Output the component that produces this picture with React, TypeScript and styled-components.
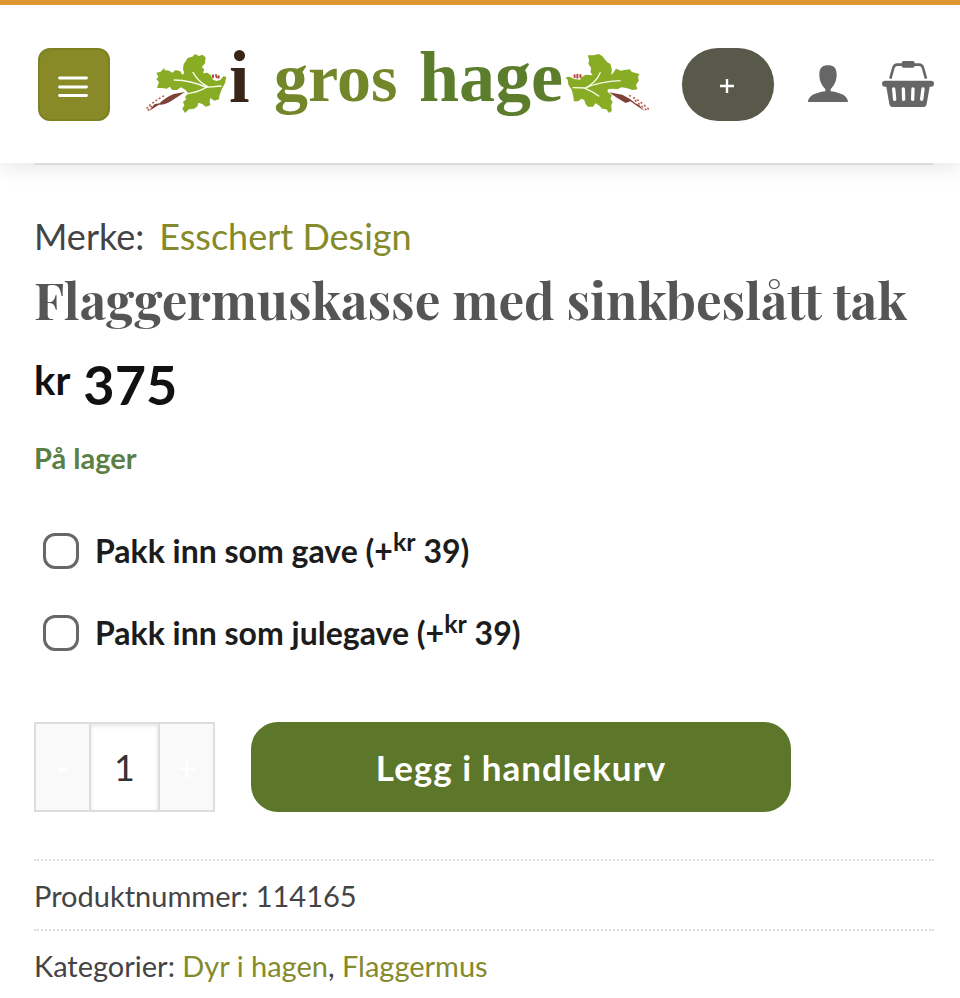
import React, { useState } from "react";
import styled, { createGlobalStyle } from "styled-components";

const olive = "#858a2a";

const GlobalStyle = createGlobalStyle`
  *, *::before, *::after { box-sizing: border-box; }
  body {
    margin: 0;
    background: #fff;
    color: #444446;
    font-family: Lato, "Open Sans", sans-serif;
  }
  button, input { font-family: inherit; margin: 0; }
`;

const Header = styled.header`
  display: flex;
  align-items: center;
  justify-content: space-between;
  border-top: 5px solid #dd9833;
  padding: 43px 26px 42px 38px;
  background: #fff;
  box-shadow: 1px 1px 24px rgba(0, 0, 0, 0.13);
`;

const MenuButton = styled.button`
  display: grid;
  place-items: center;
  width: 72px;
  height: 73px;
  padding: 5px 3px 0 0;
  border: 2px solid #7c8222;
  border-radius: 12px;
  background: #888a28;
  color: #fff;
  cursor: pointer;
`;

const LogoLink = styled.a`
  display: block;
  svg { display: block; overflow: visible; }
`;

const Actions = styled.div`
  display: flex;
  align-items: center;
  gap: 34px;
`;

const PlusButton = styled.button`
  display: grid;
  place-items: center;
  width: 92px;
  height: 73px;
  padding: 3px 2px 0 0;
  border: 0;
  border-radius: 36px;
  background: #58594a;
  color: #fff;
  cursor: pointer;
`;

const IconLink = styled.a`
  display: block;
  padding-bottom: 2px;
  color: #666;
  svg { display: block; }
`;

const Main = styled.main`
  margin: 0 26px 0 34px;
  border-top: 2px solid #dcdcdc;
  padding-top: 44px;
`;

const TextLink = styled.a`
  color: ${olive};
  text-decoration: none;
`;

const Brand = styled.div`
  display: flex;
  gap: 15px;
  font-size: 36px;
  line-height: 54px;
`;

const Title = styled.h1`
  margin: 4px 0 0;
  color: #555;
  font-family: "Playfair Display", "Liberation Serif", serif;
  font-size: 51px;
  font-weight: 700;
  line-height: 64px;
`;

const Price = styled.p`
  display: flex;
  align-items: flex-start;
  gap: 13px;
  margin: 18px 0 0;
  color: #111;
  font-size: 54px;
  font-weight: 700;
  line-height: 72px;
`;

const Currency = styled.span`
  font-size: 40px;
  line-height: 62px;
`;

const Stock = styled.p`
  margin: 15px 0 30px;
  color: #5b7f45;
  font-size: 29px;
  font-weight: 700;
  line-height: 44px;
`;

const Option = styled.label`
  display: flex;
  align-items: center;
  gap: 16px;
  height: 82px;
  padding-left: 9px;
  color: #1c1c1c;
  font-size: 32px;
  font-weight: 700;
  line-height: 44px;
  cursor: pointer;
`;

const CheckBox = styled.input`
  appearance: none;
  width: 36px;
  height: 36px;
  border: 3px solid #68686c;
  border-radius: 12px;
  background: #fff;
  &:checked { background: ${olive}; }
`;

const Sup = styled.sup`
  font-size: 25px;
  line-height: 0;
  vertical-align: 12px;
`;

const CartForm = styled.form`
  display: flex;
  gap: 36px;
  margin-top: 48px;
`;

const Quantity = styled.div`
  display: flex;
  height: 90px;
  border: 2px solid #ddd;
`;

const StepButton = styled.button`
  width: 53px;
  padding: 0;
  border: 0;
  background: #f9f9f9;
  color: #fff;
  font-size: 36px;
  cursor: pointer;
`;

const QuantityInput = styled.input`
  width: 71px;
  padding: 0;
  border: solid #ddd;
  border-width: 0 2px;
  border-radius: 0;
  background: #fff;
  box-shadow: inset 0 2px 4px rgba(0, 0, 0, 0.1);
  color: #333;
  font-size: 36px;
  text-align: center;
`;

const AddButton = styled.button`
  flex: 0 1 540px;
  height: 90px;
  border: 0;
  border-radius: 27px;
  background: #5c7729;
  color: #fff;
  font-size: 35px;
  font-weight: 700;
  letter-spacing: 1px;
  cursor: pointer;
`;

const Meta = styled.div`
  margin-top: 47px;
`;

const MetaRow = styled.div`
  border-top: 2px dotted #ddd;
  padding: 13px 0 11px;
  font-size: 29px;
  line-height: 44px;
  &:last-child { padding-bottom: 0; }
`;

function MenuIcon() {
  return (
    <svg width="30" height="22" viewBox="0 0 30 22" aria-hidden="true">
      <path d="M1.5 2H28.5M1.5 11H28.5M1.5 19.5H28.5" stroke="currentColor" strokeWidth="2.8" strokeLinecap="round" />
    </svg>
  );
}

function PlusIcon() {
  return (
    <svg width="16" height="16" viewBox="0 0 16 16" aria-hidden="true">
      <path d="M8 1V15M1 8H15" stroke="currentColor" strokeWidth="2.4" />
    </svg>
  );
}

function PersonIcon() {
  return (
    <svg width="40" height="38" viewBox="0 0 120 114" fill="currentColor" aria-hidden="true">
      <path d="M34 28C34 8 44 1 60 1S86 8 86 28C86 50 78 62 68 72V79C100 83 119 93 120 111H0C1 93 20 83 52 79V72C42 62 34 50 34 28Z" />
    </svg>
  );
}

function BasketIcon() {
  return (
    <svg width="52" height="46" viewBox="0 0 156 138" aria-hidden="true">
      <path d="M25 53L33 24Q36 11 46 11H111Q121 11 124 24L132 53" fill="none" stroke="currentColor" strokeWidth="8" />
      <rect x="59" y="0" width="39" height="20" rx="6" fill="currentColor" />
      <rect x="0" y="59" width="156" height="18" rx="9" fill="currentColor" />
      <path d="M12 72H144L134 129Q132 138 125 138H31Q24 138 22 129Z" fill="currentColor" />
      <path d="M35 84L38 115M64 84L65 115M93 84L92 115M123 84L119 115" stroke="#fff" strokeWidth="10" strokeLinecap="round" />
    </svg>
  );
}

function Logo() {
  return (
    <svg width="504" height="73" viewBox="0 0 504 73" role="img" aria-label="i gros hage">
      <g transform="translate(-5 -8) scale(.3333)">
        <path fill="#88ad25" d="M262 112L254 108 244 120 232 123 222 119 215 105 205 98 192 100 196 88 188 82 198 70 200 52 190 44 180 48 168 42 160 50 146 54 140 64 134 72 132 88 136 100 130 104 124 94 110 90 100 98 90 92 76 90 76 83 64 96 52 98 58 110 52 118 60 126 54 144 70 144 84 146 92 140 100 150 114 150 126 142 140 150 147 160 138 172 142 178 132 186 136 196 130 206 138 219 150 208 166 206 176 198 178 188 190 192 200 200 214 196 212 184 214 174 226 182 240 178 242 164 250 144 258 130Z" />
        <path fill="none" stroke="#f8faea" strokeWidth="4" strokeLinecap="round" d="M106 120Q155 121 202 142M162 97Q178 126 206 140M136 162Q175 158 202 142L246 138" />
        <path fill="#804238" d="M138 156L104 162Q76 174 62 190L46 193 30 213 60 194Q76 196 98 182Z" />
        <path fill="none" stroke="#b85f54" strokeWidth="5" strokeLinecap="round" strokeDasharray="2 10" d="M24 204Q42 184 82 164M28 210L40 196" />
        <path fill="none" stroke="#b54d45" strokeWidth="6" strokeLinecap="round" d="M222 106V112M231 105L233 112M239 109V113" />
      </g>
      <g transform="translate(403 -8) scale(.345 .3333)">
        <path fill="#88ad25" d="M54 112L60 120 62 134 72 150 76 168 78 184 90 184 100 176 108 180 112 192 118 200 134 200 140 190 150 196 160 206 172 208 180 219 188 212 186 196 190 186 184 176 188 166 176 156 176 148 190 146 204 148 216 142 230 144 248 150 262 148 258 134 266 122 264 110 268 102 246 96 240 88 224 90 214 92 200 86 192 98 186 106 188 90 184 72 174 66 160 48 150 42 134 46 118 46 122 60 120 72 128 84 126 96 132 106 112 104 100 112 96 119 78 117 66 110Z" />
        <path fill="none" stroke="#f8faea" strokeWidth="4" strokeLinecap="round" d="M212 122Q154 124 112 144L76 143M154 98Q144 126 110 145Q128 152 150 168" />
        <path fill="#804238" d="M180 157L218 164Q240 174 256 190L266 194 284 214 256 194 242 184 228 189Q204 176 180 157Z" />
        <path fill="none" stroke="#c5624f" strokeWidth="5" strokeLinecap="round" strokeDasharray="2 11" d="M240 167Q270 182 294 207M256 182L288 210" />
        <path fill="none" stroke="#b54d45" strokeWidth="6" strokeLinecap="round" d="M80 106V112M88 104V113M97 105V112" />
      </g>
      <g fontFamily="Liberation Serif, serif" fontWeight="700">
        <text x="85" y="54" fontSize="74" fill="#3a2618">i</text>
        <text x="130" y="53" fontSize="68" fill="#73872a">gros</text>
        <text x="275" y="53" fontSize="72" fill="#5c7d2c">hage</text>
      </g>
    </svg>
  );
}

interface GiftOptionProps {
  id: string;
  label: string;
}

function GiftOption({ id, label }: GiftOptionProps) {
  return (
    <Option htmlFor={id}>
      <CheckBox type="checkbox" id={id} />
      <span>
        {label} (+<Sup>kr</Sup> 39)
      </span>
    </Option>
  );
}

export default function App() {
  const [quantity, setQuantity] = useState(1);
  return (
    <>
      <GlobalStyle />
      <Header>
        <MenuButton type="button" aria-label="Meny"><MenuIcon /></MenuButton>
        <LogoLink href="#"><Logo /></LogoLink>
        <Actions>
          <PlusButton type="button" aria-label="Mer"><PlusIcon /></PlusButton>
          <IconLink href="#" aria-label="Min konto"><PersonIcon /></IconLink>
          <IconLink href="#" aria-label="Handlekurv"><BasketIcon /></IconLink>
        </Actions>
      </Header>
      <Main>
        <Brand>
          <span>Merke:</span>
          <TextLink href="#">Esschert Design</TextLink>
        </Brand>
        <Title>Flaggermuskasse med sinkbeslått tak</Title>
        <Price>
          <Currency>kr</Currency>
          <span>375</span>
        </Price>
        <Stock>På lager</Stock>
        <GiftOption id="gift" label="Pakk inn som gave" />
        <GiftOption id="christmas-gift" label="Pakk inn som julegave" />
        <CartForm onSubmit={(e) => e.preventDefault()}>
          <Quantity>
            <StepButton type="button" aria-label="Færre" onClick={() => setQuantity(Math.max(1, quantity - 1))}>-</StepButton>
            <QuantityInput
              type="text"
              inputMode="numeric"
              aria-label="Antall"
              value={quantity}
              onChange={(e) => setQuantity(Number(e.target.value) || 1)}
            />
            <StepButton type="button" aria-label="Flere" onClick={() => setQuantity(quantity + 1)}>+</StepButton>
          </Quantity>
          <AddButton type="submit">Legg i handlekurv</AddButton>
        </CartForm>
        <Meta>
          <MetaRow>Produktnummer: 114165</MetaRow>
          <MetaRow>
            Kategorier: <TextLink href="#">Dyr i hagen</TextLink>, <TextLink href="#">Flaggermus</TextLink>
          </MetaRow>
        </Meta>
      </Main>
    </>
  );
}
